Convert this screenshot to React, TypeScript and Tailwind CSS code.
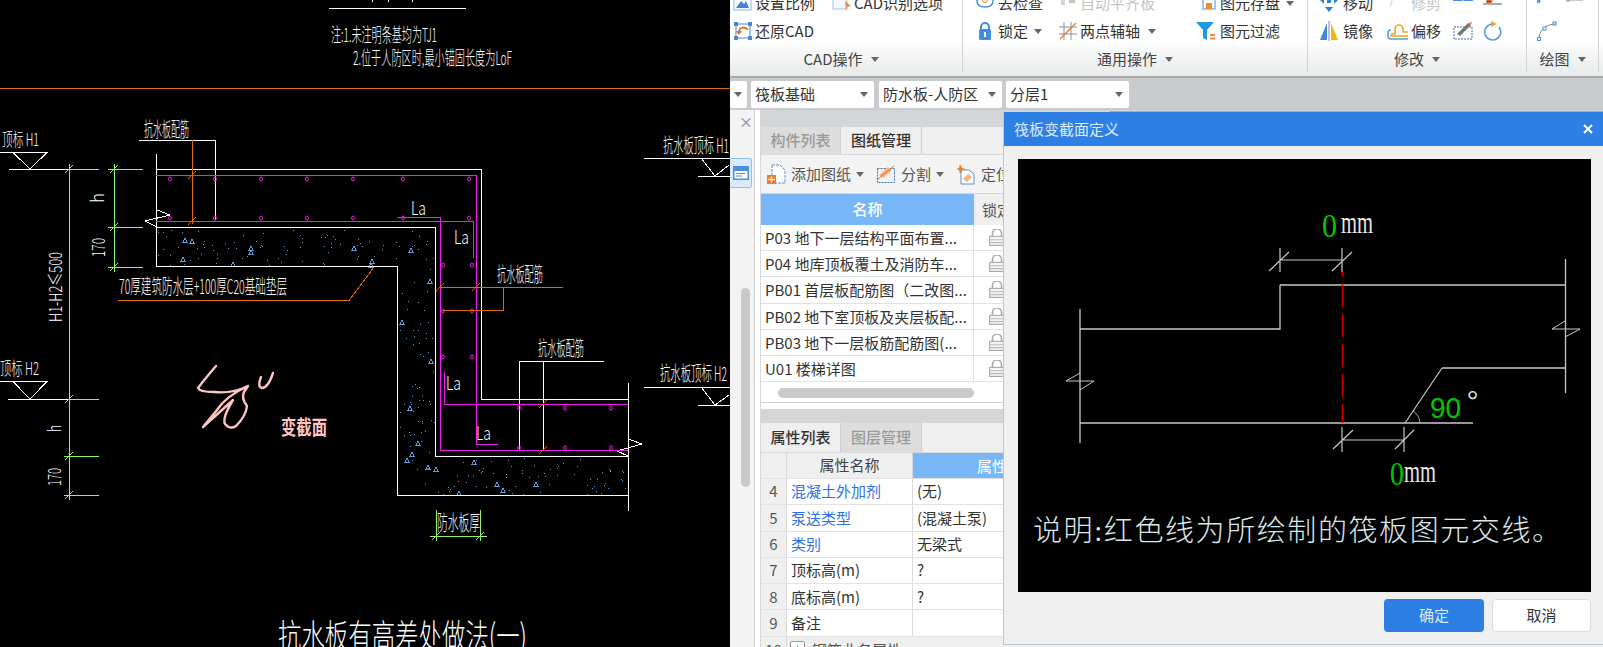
import type { ReactNode } from "react"

// ---------- CAD helpers ----------

function CadText({ x, y, w, size = 20, fill = "#fff", rotate, weight, children }: { x: number; y: number; w: number; size?: number; fill?: string; rotate?: boolean; weight?: number; children: ReactNode }) {
  return (
    <text
      transform={`translate(${x} ${y})${rotate ? " rotate(-90)" : ""}`}
      textLength={w}
      lengthAdjust="spacingAndGlyphs"
      fontSize={size}
      fill={fill}
      fontWeight={weight ?? 300}
    >
      {children}
    </text>
  )
}

const rebarX = [170, 215, 261, 307, 353, 403, 469]

function speckle() {
  const dots: { x: number; y: number; t: boolean }[] = []
  let i = 0
  const next = () => {
    i += 1
    const v = Math.sin(i * 12.9898) * 43758.5453
    return v - Math.floor(v)
  }
  const regions = [
    [158, 229, 276, 36, 95],
    [399, 267, 35, 188, 62],
    [399, 458, 228, 36, 80],
  ]
  for (const [x, y, w, h, n] of regions) {
    for (let k = 0; k < n; k++) {
      dots.push({ x: Math.round(x + next() * w), y: Math.round(y + next() * h), t: next() < 0.13 })
    }
  }
  return dots
}
const dots = speckle()

function CadDrawing() {
  const white = "#fff"
  const green = "#8ff56f"
  const mag = "#f01df0"
  const orange = "#d8690f"
  const ticksGreen: [number, number][] = [[69, 169], [69, 399], [69, 456], [69, 495], [114, 169], [114, 227], [114, 267], [436, 536], [480, 536]]
  const ticksOrange: [number, number][] = [[192, 175], [192, 221], [440, 287], [476, 287], [543, 404], [543, 450]]
  return (
    <svg className="block h-[647px] w-[730px]" viewBox="0 0 730 647" shapeRendering="crispEdges">
      <rect width="730" height="647" fill="#000" />
      {/* header notes */}
      <path d="M329 8.5H466M372 0V2M388 0V2M412 0V2" stroke={white} fill="none" />
      <CadText x={331} y={42} w={106} size={19}>注:1.未注明条基均为TJ1</CadText>
      <CadText x={353} y={65} w={159} size={19}>2.位于人防区时,最小锚固长度为LoF</CadText>
      <path d="M0 88.5H730" stroke={orange} />

      {/* concrete */}
      {dots.map((d, i) =>
        d.t ? (
          <path key={i} d={`M${d.x} ${d.y + 3}l2 -4l2 4z`} fill="none" stroke="#5d9ad6" />
        ) : (
          <rect key={i} x={d.x} y={d.y} width="1" height="1" fill="#5d9ad6" />
        ),
      )}

      {/* outline */}
      <g stroke={white} fill="none">
        <path d="M156.5 154V267M156.5 169.5H481.5V399.5H628M628.5 383V511" />
        <path d="M156 227.5H435.5V456.5H628" />
        <path d="M156 266.5H397.5V495.5H628" />
        <path d="M139 140.5H215.5V220" />
        <path d="M157 210L170 215L145 221L157 227" />
        <path d="M628 439L642 444L617 451L628 456" />
        <path d="M519 361.5H604M519.5 361V449M543.5 361V449" />
        {/* elevation marks */}
        <path d="M0 152.5H47L30 169L13 152.5M9 169.5H68" />
        <path d="M0 381.5H47L30 399L13 381.5M8 399.5H68" />
        <path d="M644 158.5H730M701 158L715 176L729 165M698 176.5H730" />
        <path d="M644 387.5H730M701 387L715 405L729 395M698 405.5H730" />
      </g>

      {/* rebar */}
      <g stroke={mag} fill="none">
        <path d="M156 175.5H476.5V444.5H498" />
        <path d="M156 221.5H473.5V258" />
        <path d="M397 217.5H440.5V450.5H628" />
        <path d="M444.5 372V404.5H628" />
      </g>
      <g stroke={mag} fill="none" shapeRendering="auto">
        {rebarX.map((x) => (
          <g key={x}>
            <ellipse cx={x} cy={179} rx="1.4" ry="2" />
            <ellipse cx={x} cy={218} rx="1.4" ry="2" />
          </g>
        ))}
        {[265, 311, 357].map((y) => (
          <g key={y}>
            <ellipse cx={443} cy={y} rx="1.4" ry="2" />
            <ellipse cx={472} cy={y} rx="1.4" ry="2" />
          </g>
        ))}
        {[519, 565, 611].map((x) => (
          <g key={x}>
            <ellipse cx={x} cy={408} rx="1.4" ry="2" />
            <ellipse cx={x} cy={448} rx="1.4" ry="2" />
          </g>
        ))}
      </g>

      {/* orange leaders */}
      <g stroke={orange} fill="none">
        <path d="M192.5 140V224" />
        <path d="M440 287.5H563M503.5 287V310.5H443" />
        <path d="M118 300.5H349L374 267" />
        {ticksOrange.map(([x, y]) => (
          <path key={`${x}-${y}`} d={`M${x - 4} ${y + 4}L${x + 4} ${y - 4}`} />
        ))}
      </g>

      {/* dimensions */}
      <g stroke={green} fill="none">
        <path d="M69.5 164V500M68 169.5H99M68 399.5H99M64 456.5H99M64 495.5H99" />
        <path d="M114.5 164V272M108 169.5H143M108 227.5H143M108 267.5H143" />
        <path d="M436.5 510V541M480.5 510V541M430 536.5H487" />
        {ticksGreen.map(([x, y]) => (
          <path key={`${x}-${y}`} d={`M${x - 4} ${y + 4}L${x + 4} ${y - 4}`} />
        ))}
      </g>

      {/* labels */}
      <CadText x={2} y={146} w={37} size={18}>顶标 H1</CadText>
      <CadText x={0} y={375} w={39} size={18}>顶标 H2</CadText>
      <CadText x={144} y={137} w={45}>抗水板配筋</CadText>
      <CadText x={497} y={282} w={46}>抗水板配筋</CadText>
      <CadText x={538} y={356} w={46}>抗水板配筋</CadText>
      <CadText x={663} y={153} w={66}>抗水板顶标 H1</CadText>
      <CadText x={660} y={381} w={67}>抗水板顶标 H2</CadText>
      <CadText x={119} y={294} w={168}>70厚建筑防水层+100厚C20基础垫层</CadText>
      <CadText x={437} y={530} w={43} size={21}>防水板厚</CadText>
      <CadText x={411} y={215} w={15} size={19}>La</CadText>
      <CadText x={454} y={244} w={15} size={19}>La</CadText>
      <CadText x={446} y={390} w={15} size={19}>La</CadText>
      <CadText x={476} y={440} w={15} size={19}>La</CadText>
      <CadText x={104} y={203} w={10} size={18} rotate>h</CadText>
      <CadText x={105} y={257} w={19} size={18} rotate>170</CadText>
      <CadText x={62} y={322} w={70} size={18} rotate>H1-H2≤500</CadText>
      <CadText x={61} y={432} w={7} size={18} rotate>h</CadText>
      <CadText x={61} y={486} w={18} size={18} rotate>170</CadText>
      <CadText x={278} y={648} w={249} size={33}>抗水板有高差处做法(一)</CadText>

      {/* handwriting */}
      <g shapeRendering="auto" stroke="#ffc4c4" strokeWidth="2.4" fill="none" strokeLinejoin="round" strokeLinecap="round">
        <path d="M216 366Q204 380 198 388Q200 392 214 392Q232 394 248 386Q226 396 217 410L203 427Q222 410 233 400Q222 418 225 424Q230 430 236 426Q246 416 247 406Q241 398 244 392L248 386" />
        <path d="M261 377Q257 387 262 388Q268 388 273 373" />
      </g>
      <CadText x={281} y={435} w={46} size={20} fill="#ffc4c4" weight={700}>变截面</CadText>
    </svg>
  )
}

// ---------- dialog drawing ----------

function SectionDrawing() {
  const c = "#c9c9c9"
  return (
    <svg className="block h-[433px] w-[573px]" viewBox="1018 159 573 433">
      <rect x="1018" y="159" width="573" height="433" fill="#000" />
      <g stroke={c} fill="none" strokeWidth="1.2">
        <path d="M1280 285H1565.5M1280 285V329H1080M1080 309V443M1080 423H1473M1565.5 259V393M1442 368H1565" strokeWidth="1.3" />
        <path d="M1442 368L1405 423" />
        <path d="M1413 411A16 16 0 0 1 1420 423" strokeWidth="0.8" />
        <path d="M1280 260H1342M1280 248V272M1342 248V272M1269 271L1289 252M1332 271L1352 252" />
        <path d="M1342 440H1404M1342 427V452M1404 427V452M1333 449L1353 430M1395 449L1414 430" />
        <path d="M1565 321L1552 329H1580L1565 337" strokeWidth="1" />
        <path d="M1080 373L1066 381H1094L1080 390" strokeWidth="1" />
      </g>
      <path d="M1342.5 272V423" stroke="#d40000" strokeWidth="1.4" strokeDasharray="23 7" strokeDashoffset="18" />
      <g fontFamily="'Liberation Serif', serif">
        <text x="1322" y="237" fontSize="33" fill="#00c800" textLength="15" lengthAdjust="spacingAndGlyphs">0</text>
        <text x="1341" y="233" fontSize="31" fill="#e8e8e8" textLength="32" lengthAdjust="spacingAndGlyphs">mm</text>
        <text x="1390" y="485" fontSize="33" fill="#00c800" textLength="14" lengthAdjust="spacingAndGlyphs">0</text>
        <text x="1404" y="482" fontSize="31" fill="#e8e8e8" textLength="32" lengthAdjust="spacingAndGlyphs">mm</text>
        <text x="1430" y="418" fontSize="30" fill="#00c800" textLength="31" lengthAdjust="spacingAndGlyphs" fontFamily="'Liberation Sans', sans-serif">90</text>
        <text x="1467" y="409" fontSize="28" fill="#e8e8e8">°</text>
        <text x="1033" y="541" fontSize="29" fill="#dbe6ea" textLength="528" fontWeight={300} fontFamily="'Liberation Serif', 'Noto Sans CJK SC', serif">说明:红色线为所绘制的筏板图元交线。</text>
      </g>
    </svg>
  )
}

// ---------- small icons ----------

const Caret = ({ className = "" }: { className?: string }) => (
  <svg width="8" height="5" viewBox="0 0 8 5" className={className}>
    <path d="M0 0H8L4 5z" fill="#666" />
  </svg>
)

const ic = "block h-[20px] w-[20px]"

const IconScale = () => (
  <svg className={ic} viewBox="0 0 20 20">
    <rect x="1" y="2" width="17" height="15" fill="#fff" stroke="#8fb7e0" />
    <path d="M3 15L8 8L11 11L13 8L16 15z" fill="#3f86d8" />
  </svg>
)
const IconRestore = () => (
  <svg className={ic} viewBox="0 0 20 20">
    <rect x="3" y="3" width="14" height="14" fill="none" stroke="#4a86d0" />
    <path d="M1 1h4v4h-4zM15 1h4v4h-4zM1 15h4v4h-4zM15 15h4v4h-4z" fill="#4a86d0" />
    <path d="M6 11C6 6 12 5 15 9" fill="none" stroke="#e86c1a" strokeWidth="1.8" />
    <path d="M3 10H9L6 14z" fill="#e86c1a" />
  </svg>
)
const IconCadOpt = () => (
  <svg className={ic} viewBox="0 0 20 20">
    <rect x="1" y="3" width="14" height="13" fill="#f4f7fb" stroke="#9fc0e4" />
    <path d="M13 8L19 13L15 14L14 18z" fill="#ef8a4a" />
  </svg>
)
const IconCheck = () => (
  <svg className={ic} viewBox="0 0 20 20">
    <path d="M2 3H18V8Q18 14 10 14Q2 14 2 8z" fill="#fff" stroke="#4a90e2" strokeWidth="1.5" />
    <circle cx="10" cy="7" r="2.5" fill="none" stroke="#ef8a3a" />
  </svg>
)
const IconAlign = () => (
  <svg className={ic} viewBox="0 0 20 20">
    <rect x="3" y="0" width="4" height="12" fill="#d5d5d5" />
    <rect x="11" y="0" width="6" height="10" fill="#c4c4c4" />
  </svg>
)
const IconLock = () => (
  <svg className={ic} viewBox="0 0 20 20">
    <path d="M6 9V6a4 4 0 0 1 8 0V9" fill="none" stroke="#3f8de4" strokeWidth="2" />
    <rect x="4" y="8" width="12" height="11" rx="1.5" fill="#3f8de4" />
    <rect x="9" y="11" width="2" height="5" fill="#fff" />
  </svg>
)
const IconAxis = () => (
  <svg className={ic} viewBox="0 0 20 20">
    <path d="M6 1V19M13 1V19M1 6H19M1 13H19" stroke="#8e8e8e" fill="none" />
    <path d="M2 18L18 2" stroke="#ec7b3a" strokeWidth="1.4" />
  </svg>
)
const IconSave = () => (
  <svg className={ic} viewBox="0 0 20 20">
    <rect x="7" y="0" width="12" height="16" fill="#fff" stroke="#4a90e2" />
    <rect x="1" y="0" width="5" height="5" fill="#fff" stroke="#4a90e2" />
    <rect x="10" y="10" width="6" height="6" fill="#ef8a3a" />
  </svg>
)
const IconFilter = () => (
  <svg className={ic} viewBox="0 0 20 20">
    <path d="M0 1H18L11 9V19L7 17V9z" fill="#1f9ae0" />
    <rect x="14" y="13" width="5" height="2" fill="#ef8a3a" />
    <rect x="14" y="16.5" width="5" height="2" fill="#ef8a3a" />
  </svg>
)
const IconMove = () => (
  <svg className={ic} viewBox="0 0 20 20">
    <path d="M10 19L6 14H14zM1 7L5 3V11zM19 7L15 3V11z" fill="#2f7fd6" />
    <rect x="8" y="2" width="4" height="8" fill="#2f7fd6" />
  </svg>
)
const IconTrim = () => (
  <svg className={ic} viewBox="0 0 20 20">
    <path d="M2 1H7L3 14M9 1H18" stroke="#c8c8c8" strokeWidth="1.5" fill="none" strokeDasharray="2 1" />
  </svg>
)
const IconBlueBar = () => (
  <svg className={ic} viewBox="0 0 20 20">
    <rect x="0" y="2" width="20" height="6" fill="#4a90e2" />
    <path d="M10 2V8" stroke="#fff" />
  </svg>
)
const IconEraser = () => (
  <svg className={ic} viewBox="0 0 20 20">
    <path d="M4 6L11 0H17L10 8z" fill="#f2c9a0" />
    <path d="M4 6L10 8L8 10H3z" fill="#c9501c" />
    <path d="M0 11H19" stroke="#555" />
  </svg>
)
const IconMirror = () => (
  <svg className={ic} viewBox="0 0 20 20">
    <path d="M8 2V19H1z" fill="#3f86d8" />
    <path d="M10 0V20" stroke="#888" />
    <path d="M12 2V19H19z" fill="#f5b512" />
  </svg>
)
const IconOffset = () => (
  <svg className="block h-[20px] w-[22px]" viewBox="0 0 22 20">
    <path d="M4 13h4v-5a4 4 0 0 1 8 0v3h5" fill="none" stroke="#f0a51e" strokeWidth="1.6" strokeLinejoin="round" />
    <path d="M4 9a3 3 0 0 0 -3 3v3a3 3 0 0 0 3 3h17" fill="none" stroke="#5b9be0" strokeWidth="1.6" />
    <path d="M3 15h18" stroke="#f0a51e" strokeWidth="1.6" />
  </svg>
)
const IconEdit = () => (
  <svg className={ic} viewBox="0 0 20 20">
    <rect x="1" y="6" width="18" height="12" fill="none" stroke="#4466aa" strokeDasharray="2 1" />
    <path d="M4 13L15 2L18 4L7 15z" fill="#777" />
    <path d="M15 2L18 4L19 1z" fill="#e8764a" />
  </svg>
)
const IconRotate = () => (
  <svg className={ic} viewBox="0 0 20 20">
    <path d="M9 3A8 8 0 1 0 16 6" fill="none" stroke="#5b9be0" strokeWidth="1.6" />
    <path d="M8 0L14 3L8 6z" fill="#f0a030" />
  </svg>
)
const IconLine = () => (
  <svg className={ic} viewBox="0 0 20 20">
    <path d="M2 9L11 0" stroke="#9cb9da" />
    <rect x="0" y="7" width="3" height="3" fill="#6a9ad6" />
  </svg>
)
const IconRect = () => (
  <svg className={ic} viewBox="0 0 20 20">
    <rect x="1.5" y="-4" width="15" height="11" fill="none" stroke="#9a9a9a" />
    <rect x="0" y="5" width="3" height="3" fill="#fff" stroke="#4a90e2" />
  </svg>
)
const IconArc = () => (
  <svg className={ic} viewBox="0 0 20 20">
    <path d="M2 18C2 10 8 4 17 3" fill="none" stroke="#888" />
    <rect x="0.5" y="16.5" width="3" height="3" fill="#fff" stroke="#4a90e2" />
    <rect x="6" y="6" width="3" height="3" fill="#fff" stroke="#4a90e2" />
    <rect x="16" y="1" width="3" height="3" fill="#cfe2f7" stroke="#4a90e2" />
  </svg>
)
const GrayLock = () => (
  <svg width="16" height="17" viewBox="0 0 14 15">
    <path d="M3 7V4a4 4 0 0 1 8 0V7" fill="none" stroke="#aaa" strokeWidth="1.4" />
    <rect x="0.5" y="6.5" width="13" height="8" fill="#f4f4f4" stroke="#aaa" />
    <path d="M1 9.5H13M1 12H13" stroke="#bbb" />
  </svg>
)
const IconAddDoc = () => (
  <svg width="19" height="21" viewBox="0 0 19 21">
    <path d="M5 1H13L18 6V19H5z" fill="#fff" stroke="#5b8fc9" strokeDasharray="3 1" />
    <rect x="0" y="11" width="9" height="9" fill="#ef7d2a" />
    <path d="M4.5 12.5V18.5M1.5 15.5H7.5" stroke="#fff" strokeWidth="1.3" />
  </svg>
)
const IconSplit = () => (
  <svg width="20" height="20" viewBox="0 0 20 20">
    <rect x="1.5" y="4.5" width="17" height="14" fill="none" stroke="#3f74b8" strokeDasharray="2 1" />
    <path d="M3 11L12 3L16 6L7 14z" fill="#f3b184" />
    <path d="M1 16L18 2" stroke="#e8742a" />
  </svg>
)
const IconLocate = () => (
  <svg width="20" height="21" viewBox="0 0 20 21">
    <path d="M5 6H13L18 10V20H5z" fill="#fff" stroke="#5b8fc9" />
    <path d="M7 15L12 10L16 13L11 18z" fill="#f3b184" />
    <path d="M4 0L6 4L10 5L6 6L4 10L3 6L0 5L3 4z" fill="#ef7d2a" />
  </svg>
)

// ---------- ribbon ----------

function RibbonItem({ icon, slot = 22, disabled, text }: { icon: ReactNode; slot?: number; disabled?: boolean; text: string }) {
  return (
    <div className={`flex h-[28px] items-center whitespace-nowrap text-[15px] ${disabled ? "text-[#c4c4c4]" : "text-[#333]"}`}>
      <span className="flex shrink-0 items-center" style={{ width: slot }}>
        {icon}
      </span>
      <span>{text}</span>
    </div>
  )
}

function RibbonGroup({ width, label, pad, children, shift = 0 }: { width: number; label: string; pad: number; children: ReactNode; shift?: number }) {
  return (
    <div className="flex h-[72px] flex-col border-r border-[#d2d4d4]" style={{ width }}>
      <div className="-mt-[11px] flex h-[56px]" style={{ paddingLeft: pad }}>
        {children}
      </div>
      <div className="mt-[2px] flex h-[30px] items-center justify-center gap-[8px] text-[15px] text-[#444]" style={{ paddingRight: shift }}>
        <span>{label}</span>
        <Caret />
      </div>
    </div>
  )
}

function Ribbon() {
  return (
    <div className="flex h-[76px] overflow-hidden bg-linear-to-b from-white via-white to-[#e8eaea] pl-0">
      <RibbonGroup width={233} label="CAD操作" pad={3} shift={10}>
        <div className="w-[99px]">
          <RibbonItem icon={<IconScale />} text="设置比例" />
          <RibbonItem icon={<IconRestore />} text="还原CAD" />
        </div>
        <div>
          <RibbonItem icon={<IconCadOpt />} text="CAD识别选项" />
        </div>
      </RibbonGroup>
      <RibbonGroup width={345} label="通用操作" pad={12}>
        <div className="w-[83px]">
          <RibbonItem icon={<IconCheck />} slot={23} text="去检查" />
          <div className="flex h-[28px] items-center text-[15px] text-[#333]">
            <span className="flex w-[23px] items-center">
              <IconLock />
            </span>
            <span>锁定</span>
            <Caret className="ml-[6px]" />
          </div>
        </div>
        <div className="w-[138px]">
          <RibbonItem icon={<IconAlign />} disabled text="自动平齐板" />
          <div className="flex h-[28px] items-center text-[15px] text-[#333]">
            <span className="flex w-[22px] items-center">
              <IconAxis />
            </span>
            <span>两点辅轴</span>
            <Caret className="ml-[8px]" />
          </div>
        </div>
        <div>
          <div className="flex h-[28px] items-center text-[15px] text-[#333]">
            <span className="flex w-[24px] items-center">
              <IconSave />
            </span>
            <span>图元存盘</span>
            <Caret className="ml-[6px]" />
          </div>
          <RibbonItem icon={<IconFilter />} slot={24} text="图元过滤" />
        </div>
      </RibbonGroup>
      <RibbonGroup width={219} label="修改" pad={11}>
        <div className="w-[68px]">
          <RibbonItem icon={<IconMove />} slot={24} text="移动" />
          <RibbonItem icon={<IconMirror />} slot={24} text="镜像" />
        </div>
        <div className="w-[66px]">
          <RibbonItem icon={<IconTrim />} slot={24} disabled text="修剪" />
          <RibbonItem icon={<IconOffset />} slot={24} text="偏移" />
        </div>
        <div className="w-[30px]">
          <div className="flex h-[28px] items-center">
            <IconBlueBar />
          </div>
          <div className="flex h-[28px] items-center">
            <IconEdit />
          </div>
        </div>
        <div className="w-[24px]">
          <div className="flex h-[28px] items-center">
            <IconEraser />
          </div>
          <div className="flex h-[28px] items-center">
            <IconRotate />
          </div>
        </div>
      </RibbonGroup>
      <RibbonGroup width={72} label="绘图" pad={10}>
        <div className="w-[29px]">
          <div className="flex h-[28px] items-center">
            <IconLine />
          </div>
          <div className="flex h-[28px] items-center">
            <IconArc />
          </div>
        </div>
        <div>
          <div className="flex h-[28px] items-center">
            <IconRect />
          </div>
        </div>
      </RibbonGroup>
    </div>
  )
}

function Select({ width, text }: { width: number; text: string }) {
  return (
    <div className="flex h-[27px] shrink-0 items-center justify-between rounded-[2px] bg-white pl-[4px] pr-[6px] text-[15px] text-[#333]" style={{ width }}>
      <span className="whitespace-nowrap">{text}</span>
      <Caret className="shrink-0" />
    </div>
  )
}

// ---------- panels ----------

const drawings = ["P03 地下一层结构平面布置...", "P04 地库顶板覆土及消防车...", "PB01 首层板配筋图（二改图...", "PB02 地下室顶板及夹层板配...", "PB03 地下一层板筋配筋图(...", "U01 楼梯详图"]

const props = [
  { n: 4, name: "混凝土外加剂", value: "(无)", link: true },
  { n: 5, name: "泵送类型", value: "(混凝土泵)", link: true },
  { n: 6, name: "类别", value: "无梁式", link: true },
  { n: 7, name: "顶标高(m)", value: "?", link: false },
  { n: 8, name: "底标高(m)", value: "?", link: false },
  { n: 9, name: "备注", value: "", link: false },
]

function Tab({ active, label, width }: { active: boolean; label: string; width: number }) {
  return (
    <div className={`flex h-full items-center justify-center border-r border-[#d0d0d0] text-[15px] font-medium ${active ? "bg-[#efefef] text-[#333]" : "bg-[#dddddd] text-[#9a9a9a]"}`} style={{ width }}>
      {label}
    </div>
  )
}

function DrawingPanel() {
  return (
    <div className="flex h-[293px] shrink-0 flex-col border-b border-[#cfcfcf]">
      <div className="h-[17px] shrink-0 bg-[#d3d5d7]" />
      <div className="flex h-[27px] shrink-0 bg-[#efefef]">
        <Tab active={false} label="构件列表" width={80} />
        <Tab active label="图纸管理" width={81} />
      </div>
      <div className="flex h-[40px] shrink-0 items-center border-y border-[#d8d8d8] bg-[#f3f3f3] pl-[6px] text-[15px] text-[#555]">
        <IconAddDoc />
        <span className="ml-[5px]">添加图纸</span>
        <Caret className="ml-[5px]" />
        <span className="ml-[12px] flex">
          <IconSplit />
        </span>
        <span className="ml-[5px]">分割</span>
        <Caret className="ml-[5px]" />
        <span className="ml-[12px] flex">
          <IconLocate />
        </span>
        <span className="ml-[5px] whitespace-nowrap">定位</span>
      </div>
      <div className="flex h-[31px] shrink-0">
        <div className="flex w-[213px] items-center justify-center bg-[#78b7f7] text-[15px] font-medium text-white">名称</div>
        <div className="flex-1 whitespace-nowrap bg-[#efefef] pl-[8px] text-[15px] leading-[31px] text-[#555]">锁定</div>
      </div>
      {drawings.map((d) => (
        <div key={d} className="flex h-[26.2px] shrink-0 border-b border-[#e2e2e2] bg-white">
          <div className="w-[213px] truncate border-r border-[#e2e2e2] pl-[4px] text-[15px] leading-[25px] text-[#333]">{d}</div>
          <div className="flex flex-1 items-center pl-[15px]">
            <GrayLock />
          </div>
        </div>
      ))}
      <div className="flex-1 bg-white pl-[17px] pt-[6px]">
        <div className="h-[10px] w-[196px] rounded-full bg-[#c9c9c9]" />
      </div>
    </div>
  )
}

function PropertyPanel() {
  return (
    <div className="flex min-h-0 flex-1 flex-col overflow-hidden">
      <div className="h-[14px] shrink-0 bg-[#d3d5d7]" />
      <div className="flex h-[29px] shrink-0 bg-[#efefef]">
        <Tab active label="属性列表" width={80} />
        <Tab active={false} label="图层管理" width={81} />
      </div>
      <div className="flex h-[26px] shrink-0 border-t border-[#d8d8d8] text-[15px]">
        <div className="w-[26px] border-r border-[#d8d8d8] bg-[#efefef]" />
        <div className="flex w-[126px] items-center justify-center border-r border-[#d8d8d8] bg-[#efefef] text-[#444]">属性名称</div>
        <div className="flex-1 bg-[#78b7f7] pl-[64px] leading-[25px] text-white">属性值</div>
      </div>
      {props.map((p) => (
        <div key={p.n} className="flex h-[26.3px] shrink-0 border-t border-[#e2e2e2] bg-white text-[15px]">
          <div className="flex w-[26px] items-center justify-center border-r border-[#dcdcdc] bg-[#efefef] text-[#555]">{p.n}</div>
          <div className={`flex w-[126px] items-center border-r border-[#dcdcdc] pl-[4px] ${p.link ? "text-[#2f6fe8]" : "text-[#333]"}`}>{p.name}</div>
          <div className="flex flex-1 items-center pl-[4px] text-[#333]">{p.value}</div>
        </div>
      ))}
      <div className="flex h-[26px] shrink-0 border-t border-[#e2e2e2] bg-[#efefef] text-[15px] text-[#555]">
        <div className="flex w-[26px] justify-center border-r border-[#dcdcdc] leading-[25px]">10</div>
        <div className="flex items-start pl-[3px] pt-[4px]">
          <span className="flex h-[14px] w-[15px] items-center justify-center rounded-[2px] border border-[#999] bg-white text-[12px] leading-none">+</span>
          <span className="ml-[7px] whitespace-nowrap leading-[18px]">钢筋业务属性</span>
        </div>
      </div>
    </div>
  )
}

function Dialog() {
  return (
    <div className="absolute left-[1003px] top-[112px] flex h-[533px] w-[600px] flex-col border-l border-b border-[#b9c6d4] bg-[#f0f0f0]">
      <div className="flex h-[34px] shrink-0 items-center justify-between bg-[#2d7fe3] pl-[10px] pr-[9px] text-[15px] text-[#dcebfc]">
        <span>筏板变截面定义</span>
        <svg width="12" height="12" viewBox="0 0 12 12">
          <path d="M2 2L10 10M10 2L2 10" stroke="#fff" strokeWidth="2" />
        </svg>
      </div>
      <div className="ml-[14px] mt-[13px]">
        <SectionDrawing />
      </div>
      <div className="mt-[7px] flex justify-end gap-[8px] pr-[12px] text-[15px]">
        <div className="flex h-[33px] w-[100px] items-center justify-center rounded-[4px] bg-[#2d7fe3] text-[#dcebfc]">确定</div>
        <div className="flex h-[33px] w-[99px] items-center justify-center rounded-[4px] border border-[#dcdcdc] bg-white text-[#333]">取消</div>
      </div>
    </div>
  )
}

export default function App() {
  return (
    <div className="relative flex h-[647px] w-[1603px] overflow-hidden bg-white font-['Noto_Sans_CJK_SC',sans-serif]">
      <div className="w-[730px] shrink-0">
        <CadDrawing />
      </div>
      <div className="flex min-w-0 flex-1 flex-col">
        <Ribbon />
        <div className="h-[2px] shrink-0 bg-[#a8aaaa]" />
        <div className="flex h-[32px] shrink-0 items-center bg-[#c9cbce]">
          <Select width={17} text="" />
          <div className="ml-[4px]">
            <Select width={123} text="筏板基础" />
          </div>
          <div className="ml-[5px]">
            <Select width={123} text="防水板-人防区" />
          </div>
          <div className="ml-[4px]">
            <Select width={123} text="分层1" />
          </div>
        </div>
        <div className="flex min-h-0 flex-1">
          <div className="relative w-[25px] shrink-0 border-r border-[#cfcfcf] bg-[#f3f3f3]">
            <span className="absolute left-[9px] top-[4px] text-[14px] leading-none text-[#888]">×</span>
            <div className="absolute left-0 top-[48px] flex h-[30px] w-[22px] items-center justify-center rounded-r-[3px] border border-l-0 border-[#8cc0f0] bg-[#dbeafb]">
              <svg width="16" height="14" viewBox="0 0 16 14">
                <rect x="0" y="0" width="16" height="14" fill="#4a90e2" />
                <rect x="1.5" y="5" width="13" height="7.5" fill="#fff" />
                <path d="M3 7.5H12M3 10H9" stroke="#4a90e2" />
              </svg>
            </div>
            <div className="absolute left-[11px] top-[178px] h-[199px] w-[9px] rounded-full bg-[#c9c9c9]" />
          </div>
          <div className="w-[6px] shrink-0 border-r border-[#d8d8d8] bg-white" />
          <div className="flex min-w-0 flex-1 flex-col">
            <DrawingPanel />
            <div className="h-[6px] shrink-0 bg-white" />
            <PropertyPanel />
          </div>
        </div>
      </div>
      {/* bleed of the drawing behind the dialog */}
      <div className="absolute left-[1110px] top-[111px] h-[1px] w-[493px] bg-[#9fb0a8]" />
      <Dialog />
    </div>
  )
}
